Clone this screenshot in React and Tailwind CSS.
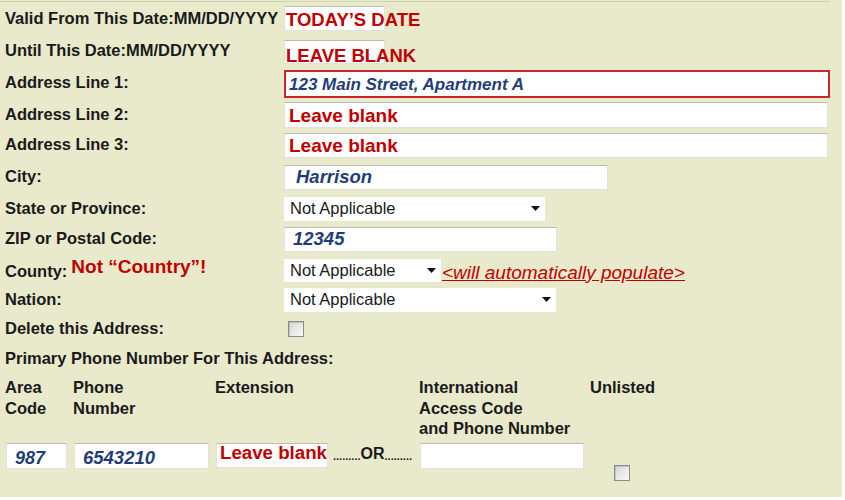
const font = "font-['Liberation_Sans',Arial,sans-serif]";

const Row = ({ label, h, lift = 0, children }) => (
  <div className="flex items-center" style={{ height: h }}>
    <div className="w-[279px] shrink-0 text-[16.5px] font-bold leading-none text-[#1a1a1a]" style={{ marginTop: -lift * 2 }}>
      {label}
    </div>
    {children}
  </div>
);

const Box = ({ w, h, children, className = "" }) => (
  <div
    className={`shrink-0 whitespace-nowrap border border-[#e2e2da] border-t-[#bcbcb2] bg-white ${className}`}
    style={{ width: w, height: h }}
  >
    {children}
  </div>
);

const Select = ({ w, h = 24 }) => (
  <div className="flex shrink-0 items-center justify-between bg-white pl-[6px] pr-[5px]" style={{ width: w, height: h }}>
    <span className="text-[16.5px] leading-none text-[#1a1a1a]">Not Applicable</span>
    <svg width="9" height="5" viewBox="0 0 9 5">
      <path d="M0 0h9L4.5 5z" fill="#111" />
    </svg>
  </div>
);

const Check = () => (
  <div className="h-4 w-4 border border-[#8c8c8c] bg-gradient-to-br from-[#d9d9d9] to-[#f8f8f8] shadow-[inset_1px_1px_1px_rgba(0,0,0,0.15)]" />
);

const red = "font-bold text-[#c00000]";
const blue = "font-bold italic text-[#1f3d7a]";

export default function App() {
  return (
    <div className={`h-[497px] w-[842px] bg-[#e9e9cb] pt-px ${font}`}>
      <div className="h-px w-[830px] bg-[#d0d0b0]" />
      <div className="pl-[5px]">
        <Row label="Valid From This Date:MM/DD/YYYY" h={33}>
          <Box w={101} h={25}>
            <div className={`${red} pl-px pt-[2px] text-[18.5px] leading-[22px]`}>TODAY’S DATE</div>
          </Box>
        </Row>
        <Row label="Until This Date:MM/DD/YYYY" h={33} lift={1.5}>
          <Box w={101} h={24}>
            <div className={`${red} pl-px pt-[4px] text-[18.5px] leading-[22px]`}>LEAVE BLANK</div>
          </Box>
        </Row>
        <Row label="Address Line 1:" h={32} lift={2}>
          <div className="flex h-[28px] w-[546px] shrink-0 items-center border-2 border-[#c9252c] bg-white pl-[3px]">
            <span className={`${blue} text-[17px] leading-none`}>123 Main Street, Apartment A</span>
          </div>
        </Row>
        <Row label="Address Line 2:" h={30} lift={1}>
          <Box w={544} h={26} className="flex items-center pl-[4px]">
            <span className={`${red} text-[19px] leading-none`}>Leave blank</span>
          </Box>
        </Row>
        <Row label="Address Line 3:" h={31} lift={1}>
          <Box w={544} h={25} className="flex items-center pl-[4px]">
            <span className={`${red} text-[19px] leading-none`}>Leave blank</span>
          </Box>
        </Row>
        <Row label="City:" h={32} lift={1}>
          <Box w={324} h={25} className="flex items-center pl-[11px]">
            <span className={`${blue} text-[18.5px] leading-none`}>Harrison</span>
          </Box>
        </Row>
        <Row label="State or Province:" h={31}>
          <Select w={261} />
        </Row>
        <Row label="ZIP or Postal Code:" h={31} lift={1.5}>
          <Box w={273} h={25} className="flex items-center pl-[8px]">
            <span className={`${blue} text-[18.5px] leading-none`}>12345</span>
          </Box>
        </Row>
        <Row
          h={30}
          lift={0.5}
          label={
            <span className="flex items-end">
              County:
              <span className={`${red} relative -top-[3px] ml-[4px] text-[19px] leading-none`}>Not “Country”!</span>
            </span>
          }
        >
          <Select w={157} h={23} />
          <span className="ml-[1px] mt-[4px] text-[19px] italic leading-none text-[#c00000] underline">
            &lt;will automatically populate&gt;
          </span>
        </Row>
        <Row label="Nation:" h={29}>
          <Select w={272} />
        </Row>
        <Row label="Delete this Address:" h={29}>
          <div className="pl-[4px]">
            <Check />
          </div>
        </Row>
        <div className="flex h-[30px] items-center text-[16.5px] font-bold leading-none text-[#1a1a1a]">
          Primary Phone Number For This Address:
        </div>

        <div className="mt-[4px] flex text-[16.5px] font-bold leading-[20.5px] text-[#1a1a1a]">
          <div className="w-[68px] shrink-0">
            <div className="h-[66px]">Area<br />Code</div>
            <Box w={61} h={26} className="ml-px pl-[8px] pt-[4px]">
              <span className={`${blue} text-[18px] leading-none`}>987</span>
            </Box>
          </div>
          <div className="w-[142px] shrink-0">
            <div className="h-[66px]">Phone<br />Number</div>
            <Box w={135} h={26} className="ml-px pl-[8px] pt-[4px]">
              <span className={`${blue} text-[18.5px] leading-none`}>6543210</span>
            </Box>
          </div>
          <div className="w-[118px] shrink-0">
            <div className="h-[66px]">Extension</div>
            <Box w={112} h={25} className="ml-px pl-[3px]">
              <span className={`${red} block text-[18.7px] leading-[18px]`}>Leave blank</span>
            </Box>
          </div>
          <div className="w-[86px] shrink-0">
            <div className="h-[66px]" />
            <div className="flex items-end pt-[3px] leading-none">
              <span className="text-[11px] font-bold">.........</span>
              <span className="text-[16px] font-bold">OR</span>
              <span className="text-[11px] font-bold">.........</span>
            </div>
          </div>
          <div className="w-[171px] shrink-0">
            <div className="h-[66px]">International<br />Access Code<br />and Phone Number</div>
            <Box w={164} h={26} className="ml-px" />
          </div>
          <div className="shrink-0">
            <div className="h-[88px]">Unlisted</div>
            <div className="pl-[24px]">
              <Check />
            </div>
          </div>
        </div>
      </div>
    </div>
  );
}
